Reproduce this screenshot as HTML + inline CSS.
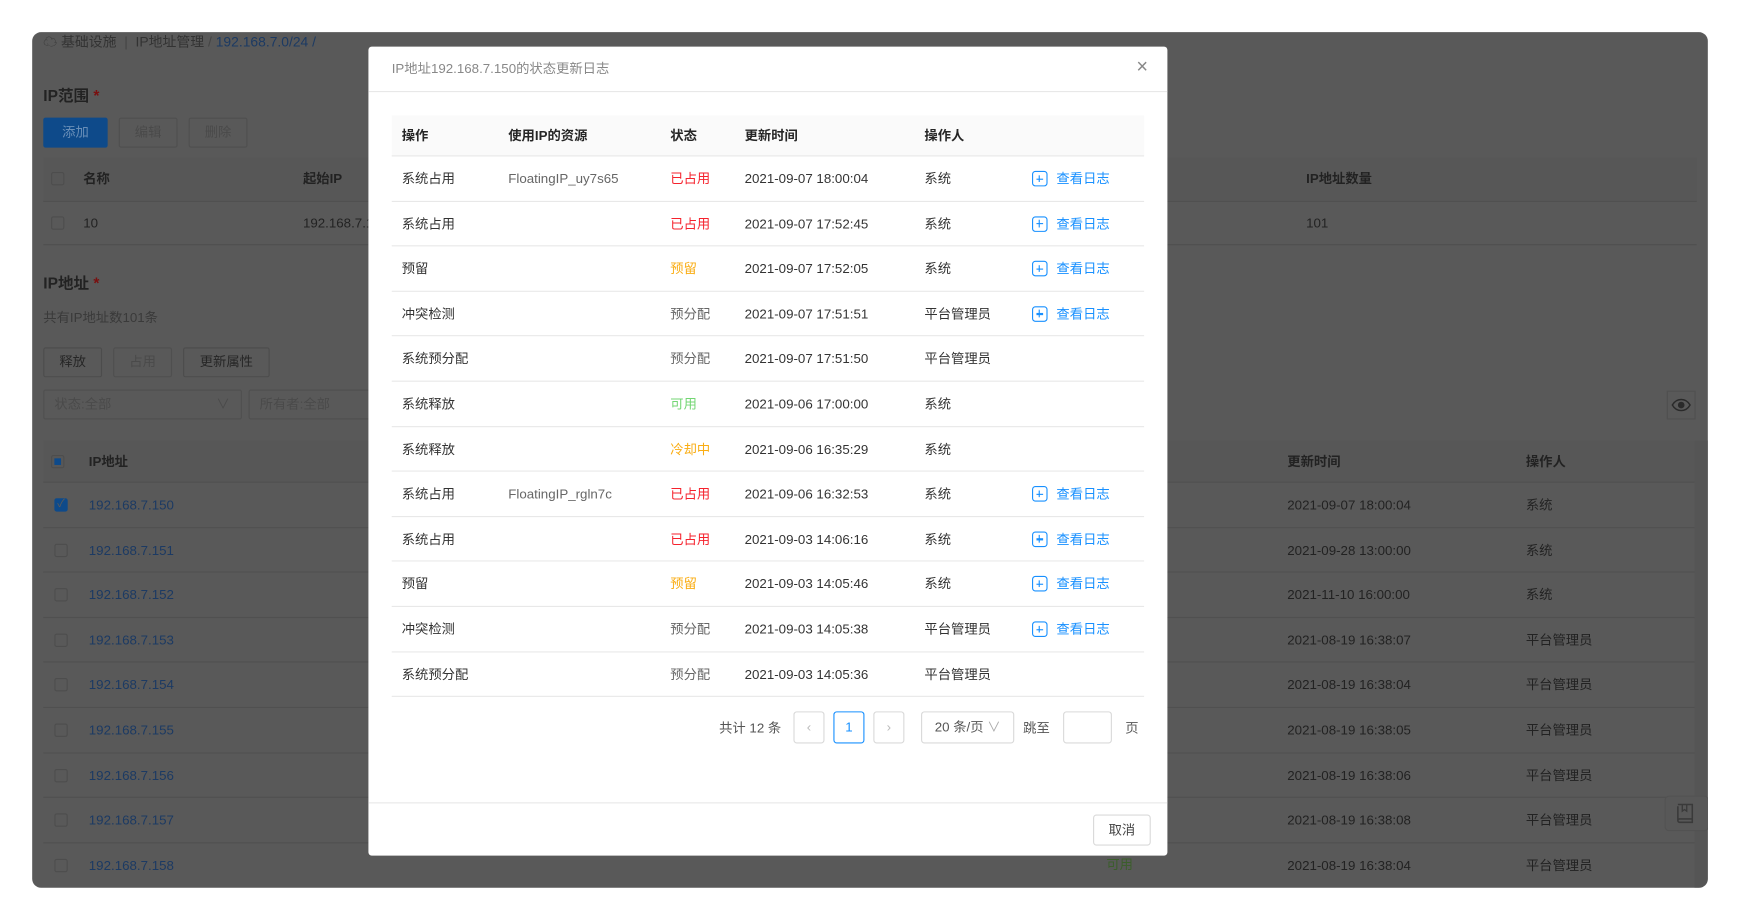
<!DOCTYPE html>
<html><head><meta charset="utf-8">
<style>
*{margin:0;padding:0;box-sizing:border-box}
html,body{width:1740px;height:920px;overflow:hidden;background:#fff}
body{font-family:"Liberation Sans","Noto Sans CJK SC",sans-serif;font-size:12px;line-height:16px;color:#262626}
#s{position:absolute;left:0;top:0;width:1568px;height:829px;transform:scale(1.1097);transform-origin:0 0}
.a{position:absolute;white-space:nowrap}
#panel{position:absolute;left:29px;top:29px;width:1510px;height:771px;background:#595959;border-radius:8px;overflow:hidden}
.bg{color:#222}
.bl{color:#1c3a63}
.btnd{position:absolute;border:1px solid #4f4f4f;border-radius:2px;text-align:center;line-height:25px;color:#4a4a4a}
.btn2{position:absolute;border:1px solid #4c4c4c;border-radius:2px;text-align:center;line-height:25px;color:#262626}
.hl{position:absolute;height:1px;background:#505050}
.cb{position:absolute;width:12px;height:12px;border:1px solid #4d4d4d;border-radius:2px}
#modal{position:absolute;left:332px;top:42px;width:720px;height:729px;background:#fff;border-radius:3px}
.mt{position:absolute;left:21px;width:678px}
.row{position:absolute;left:0;width:678px;height:40.6px;border-bottom:1px solid #e8e8e8}
.row span{position:absolute;top:12px;white-space:nowrap;color:#333;line-height:16px}
.red{color:#f5222d!important}.org{color:#faad14!important}.grn{color:#73d673!important}.gry{color:#666!important}
.lk{color:#1890ff!important}
.ic{position:absolute;width:14px;height:14px;border:1.3px solid #1890ff;border-radius:3px;top:13px;left:577px}
.ic:before{content:"";position:absolute;left:2.5px;top:5.5px;width:6.5px;height:1.3px;background:#1890ff}
.ic:after{content:"";position:absolute;left:5.1px;top:2.5px;width:1.3px;height:6.5px;background:#1890ff}
.pb{position:absolute;top:599px;height:29px;border:1px solid #d9d9d9;border-radius:3px;text-align:center;line-height:27px;color:#bbb}
</style></head><body><div id="s">
<div id="panel">
 <div class="a bg" style="left:10px;top:1px;color:#333;font-size:12.5px">☁ 基础设施 <span style="color:#444">&nbsp;|&nbsp;</span> IP地址管理 <span style="color:#444">/</span> <span class="bl">192.168.7.0/24</span> <span class="bl">/</span></div>
 <div class="a bg" style="left:10px;top:49px;font-size:14px;font-weight:bold">IP范围 <span style="color:#7a1010">*</span></div>
 <div class="a" style="left:10px;top:77px;width:58px;height:27px;background:#0e4a8a;border-radius:2px;color:#6a8fb8;text-align:center;line-height:27px">添加</div>
 <div class="btnd" style="left:78px;top:77px;width:53px;height:27px">编辑</div>
 <div class="btnd" style="left:141px;top:77px;width:53px;height:27px">删除</div>
 <div class="a" style="left:10px;top:113px;width:1490px;height:39px;background:#575757"></div>
 <div class="cb" style="left:17px;top:126px"></div>
 <div class="a bg" style="left:46px;top:124px;font-weight:bold">名称</div>
 <div class="a bg" style="left:244px;top:124px;font-weight:bold">起始IP</div>
 <div class="a bg" style="left:1148px;top:124px;font-weight:bold">IP地址数量</div>
 <div class="hl" style="left:10px;top:152px;width:1490px"></div>
 <div class="cb" style="left:17px;top:166px"></div>
 <div class="a bg" style="left:46px;top:164px">10</div>
 <div class="a bg" style="left:244px;top:164px">192.168.7.1</div>
 <div class="a bg" style="left:1148px;top:164px">101</div>
 <div class="hl" style="left:10px;top:191px;width:1490px"></div>
 <div class="a bg" style="left:10px;top:218px;font-size:14px;font-weight:bold">IP地址 <span style="color:#7a1010">*</span></div>
 <div class="a" style="left:10px;top:249px;color:#3a3a3a">共有IP地址数101条</div>
 <div class="btn2" style="left:10px;top:284px;width:53px;height:27px">释放</div>
 <div class="btnd" style="left:73px;top:284px;width:53px;height:27px">占用</div>
 <div class="btn2" style="left:136px;top:284px;width:78px;height:27px">更新属性</div>
 <div class="btnd" style="left:10px;top:322px;width:179px;height:27px;text-align:left;padding-left:9px">状态:全部<span style="position:absolute;right:10px;color:#4a4a4a">∨</span></div>
 <div class="btnd" style="left:195px;top:322px;width:120px;height:27px;text-align:left;padding-left:9px">所有者:全部</div>
 <div class="a" style="left:1473px;top:323px;width:26px;height:26px;border:1px solid #505050">
  <svg width="24" height="24" viewBox="0 0 24 24" style="position:absolute;left:0;top:0"><path d="M4 12c2-3.5 5-5 8-5s6 1.5 8 5c-2 3.5-5 5-8 5s-6-1.5-8-5z" fill="none" stroke="#2a2a2a" stroke-width="1.3"/><circle cx="12" cy="12" r="3" fill="#2a2a2a"/></svg></div>
 <div class="a" style="left:10px;top:368px;width:1488px;height:37px;background:#575757"></div>
 <div class="a" style="left:1498px;top:368px;width:12px;height:403px;background:#555"></div>
 <div class="a" style="left:17px;top:381px;width:12px;height:12px;border:1px solid #4d4d4d;border-radius:2px"><div style="margin:2px;width:6px;height:6px;background:#0e4a8a"></div></div>
 <div class="a bg" style="left:51px;top:379px;font-weight:bold">IP地址</div>
 <div class="a bg" style="left:1131px;top:379px;font-weight:bold">更新时间</div>
 <div class="a bg" style="left:1346px;top:379px;font-weight:bold">操作人</div>
 <div class="hl" style="left:10px;top:405px;width:1488px"></div>
 <div id="rows"></div>
 <div class="a" style="left:1471px;top:688px;width:40px;height:32px;border:1px solid #525252;border-radius:4px;background:#585858">
  <svg width="40" height="32" viewBox="0 0 40 32" style="position:absolute;left:0;top:0"><path d="M11 7h13v16H12.5a1.5 1.5 0 0 1 0-3H24M11 8.5v13" fill="none" stroke="#3a3a3a" stroke-width="1.4"/><path d="M15 7v6l2-1.5 2 1.5V7" fill="none" stroke="#3a3a3a" stroke-width="1.2"/></svg></div>
 <div class="a" style="left:968px;top:742px;color:#3b5e2b">可用</div>
</div>
<div id="modal">
 <div class="a" style="left:21px;top:12px;color:#888;font-size:12px">IP地址192.168.7.150的状态更新日志</div>
 <div class="a" style="left:692px;top:10px;color:#888;font-size:18px;font-weight:300">×</div>
 <div class="a" style="left:0;top:40px;width:720px;height:1px;background:#e8e8e8"></div>
 <div class="mt" style="top:62px;height:37px;background:#fafafa;border-bottom:1px solid #e8e8e8;font-weight:bold">
  <span class="a" style="left:9px;top:10px">操作</span><span class="a" style="left:105px;top:10px">使用IP的资源</span><span class="a" style="left:251px;top:10px">状态</span><span class="a" style="left:318px;top:10px">更新时间</span><span class="a" style="left:480px;top:10px">操作人</span>
 </div>
 <div class="mt" id="mrows" style="top:99px;height:490px"></div>
 <div class="a" style="left:316px;top:606px;color:#555">共计 12 条</div>
 <div class="pb" style="left:383px;width:28px">&lsaquo;</div>
 <div class="pb" style="left:419px;width:28px;border-color:#1890ff;color:#1890ff">1</div>
 <div class="pb" style="left:455px;width:28px">&rsaquo;</div>
 <div class="pb" style="left:498px;width:84px;color:#555">20 条/页 <span style="color:#aaa">∨</span></div>
 <div class="a" style="left:590px;top:606px;color:#555">跳至</div>
 <div class="pb" style="left:626px;width:44px"></div>
 <div class="a" style="left:682px;top:606px;color:#555">页</div>
 <div class="a" style="left:0;top:681px;width:720px;height:1px;background:#e8e8e8"></div>
 <div class="a" style="left:653px;top:692px;width:52px;height:28px;border:1px solid #d9d9d9;border-radius:3px;text-align:center;line-height:26px;color:#444">取消</div>
</div>
</div>
<script>
var d=[["2021-09-07 18:00:04","系统"],["2021-09-28 13:00:00","系统"],["2021-11-10 16:00:00","系统"],["2021-08-19 16:38:07","平台管理员"],["2021-08-19 16:38:04","平台管理员"],["2021-08-19 16:38:05","平台管理员"],["2021-08-19 16:38:06","平台管理员"],["2021-08-19 16:38:08","平台管理员"],["2021-08-19 16:38:04","平台管理员"]];
var h="";for(var i=0;i<9;i++){var y=405+i*40.6;
h+='<div class="cb" style="left:20px;top:'+(y+15)+'px;'+(i==0?'background:#0e4a8a;border-color:#0e4a8a;color:#5a5a5a;font-size:10px;line-height:10px;text-align:center':'')+'">'+(i==0?'✓':'')+'</div>';
h+='<div class="a bl" style="left:51px;top:'+(y+13)+'px">192.168.7.'+(150+i)+'</div>';
h+='<div class="a bg" style="left:1131px;top:'+(y+13)+'px">'+d[i][0]+'</div>';
h+='<div class="a bg" style="left:1346px;top:'+(y+13)+'px">'+d[i][1]+'</div>';
if(i<8)h+='<div class="hl" style="left:10px;top:'+(y+40.6)+'px;width:1488px"></div>';}
document.getElementById("rows").innerHTML=h;
var m=[["系统占用","FloatingIP_uy7s65","已占用","red","2021-09-07 18:00:04","系统",1],
["系统占用","","已占用","red","2021-09-07 17:52:45","系统",1],
["预留","","预留","org","2021-09-07 17:52:05","系统",1],
["冲突检测","","预分配","gry","2021-09-07 17:51:51","平台管理员",1],
["系统预分配","","预分配","gry","2021-09-07 17:51:50","平台管理员",0],
["系统释放","","可用","grn","2021-09-06 17:00:00","系统",0],
["系统释放","","冷却中","org","2021-09-06 16:35:29","系统",0],
["系统占用","FloatingIP_rgln7c","已占用","red","2021-09-06 16:32:53","系统",1],
["系统占用","","已占用","red","2021-09-03 14:06:16","系统",1],
["预留","","预留","org","2021-09-03 14:05:46","系统",1],
["冲突检测","","预分配","gry","2021-09-03 14:05:38","平台管理员",1],
["系统预分配","","预分配","gry","2021-09-03 14:05:36","平台管理员",0]];
h="";for(var i=0;i<12;i++){var r=m[i];
h+='<div class="row" style="top:'+(i*40.6)+'px"><span style="left:9px">'+r[0]+'</span><span style="left:105px" class="gry">'+r[1]+'</span><span style="left:251px" class="'+r[3]+'">'+r[2]+'</span><span style="left:318px">'+r[4]+'</span><span style="left:480px">'+r[5]+'</span>'+(r[6]?'<div class="ic"></div><span class="lk" style="left:599px">查看日志</span>':'')+'</div>';}
document.getElementById("mrows").innerHTML=h;
</script>
</body></html>
